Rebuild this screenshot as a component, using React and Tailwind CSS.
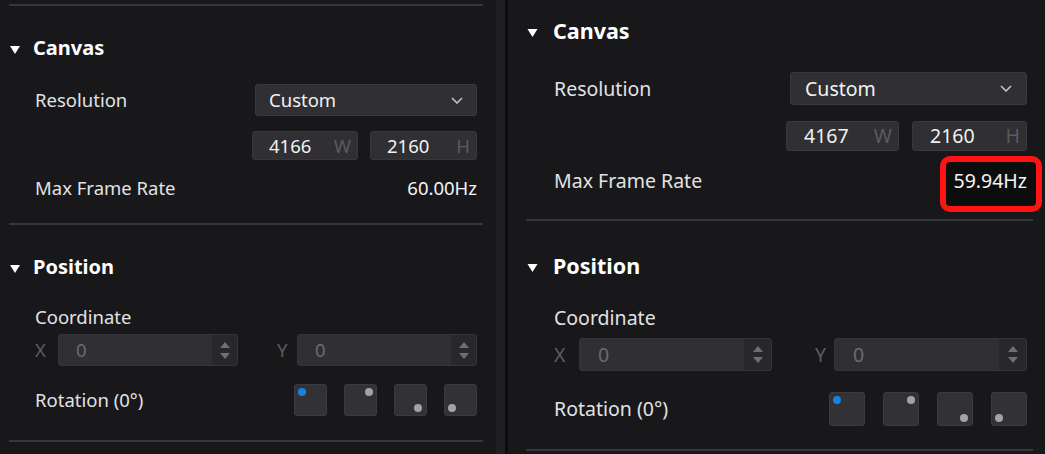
import React from 'react';

// two copies of the same property panel, the right one drawn a bit larger
const SMALL = {
  root: 'w-[496px] pt-[4px]',
  topLine: 'ml-[9px] w-[474px]',
  line: 'ml-[9px] w-[474px]',
  head: 'ml-[10px] h-[28px] gap-[13px]',
  tri: 'w-[10px] h-[8px]',
  title: 'text-[20px]',
  rows: 'ml-[35px] w-[442px]',
  text: 'text-[18.5px]',
  res: 'mt-[22px] h-[32px]',
  select: 'w-[222px] px-[13px]',
  dims: 'mt-[15px] h-[29px] gap-[12px]',
  dimW: 'w-[106px]',
  dimH: 'w-[107px]',
  dimPad: 'pl-[16px] pr-[6px]',
  rate: 'mt-[16px] h-[24px]',
  lineMid: 'mt-[23px]',
  head2: 'mt-[28px]',
  coord: 'mt-[24px] h-[24px]',
  xy: 'mt-[5px] h-[32px]',
  xLabel: 'w-[23px]',
  yLabel: 'w-[20px]',
  xyInput: 'w-[180px]',
  stepper: 'w-[25px]',
  zeroPad: 'pl-[17px]',
  rot: 'mt-[18px] h-[32px]',
  boxes: 'gap-[17px]',
  box: 'w-[33px] h-[32px]',
  lineEnd: 'mt-[24px]',
};

const LARGE = {
  root: 'flex-1 pt-[16px]',
  topLine: '',
  line: 'ml-[18px] w-[507px]',
  head: 'ml-[19px] h-[30px] gap-[15px]',
  tri: 'w-[11px] h-[8px]',
  title: 'text-[21.5px]',
  rows: 'ml-[46px] w-[473px]',
  text: 'text-[19.5px]',
  res: 'mt-[26px] h-[33px]',
  select: 'w-[237px] px-[14px]',
  dims: 'mt-[16px] h-[30px] gap-[13px]',
  dimW: 'w-[113px]',
  dimH: 'w-[115px]',
  dimPad: 'pl-[17px] pr-[6px]',
  rate: 'mt-[17px] h-[26px]',
  lineMid: 'mt-[25px]',
  head2: 'mt-[30px]',
  coord: 'mt-[24px] h-[26px]',
  xy: 'mt-[7px] h-[33px]',
  xLabel: 'w-[25px]',
  yLabel: 'w-[19px]',
  xyInput: 'w-[193px]',
  stepper: 'w-[27px]',
  zeroPad: 'pl-[18px]',
  rot: 'mt-[21px] h-[34px]',
  boxes: 'gap-[18px]',
  box: 'w-[36px] h-[34px]',
  lineEnd: 'mt-[23px]',
};

const Line = ({ className }) => <div className={`h-[2px] bg-[#36363c] ${className}`} />;

const Header = ({ s, title, className = '' }) => (
  <div className={`flex items-center ${s.head} ${className}`}>
    <svg viewBox="0 0 10 8" className={`${s.tri} mt-[3px]`}>
      <polygon points="0,0 10,0 5,8" fill="#ffffff" />
    </svg>
    <span className={`font-bold text-white ${s.title}`}>{title}</span>
  </div>
);

const Chevron = () => (
  <svg viewBox="0 0 12 7" className="w-[12px] h-[7px]">
    <path d="M1 1l5 5 5-5" fill="none" stroke="#c4c4c7" strokeWidth="1.6" />
  </svg>
);

const Stepper = ({ s }) => (
  <div className={`h-full ${s.stepper} bg-[#28282c] flex flex-col items-center justify-center gap-[5px] rounded-r-[3px]`}>
    <svg viewBox="0 0 10 6" className="w-[10px] h-[6px]">
      <polygon points="0,6 10,6 5,0" fill="#6e6e73" />
    </svg>
    <svg viewBox="0 0 10 6" className="w-[10px] h-[6px]">
      <polygon points="0,0 10,0 5,6" fill="#6e6e73" />
    </svg>
  </div>
);

const DimInput = ({ s, w, value, unit }) => (
  <div className={`h-full ${w} ${s.dimPad} bg-[#2f2f34] border border-[#37373c] rounded-[3px] flex items-center justify-between`}>
    <span className="text-[#f2f2f2]">{value}</span>
    <span className="text-[#5b5b60]">{unit}</span>
  </div>
);

const CoordInput = ({ s }) => (
  <div className={`h-full ${s.xyInput} bg-[#2f2f34] border border-[#34343a] rounded-[3px] flex items-center justify-between overflow-hidden`}>
    <span className={`${s.zeroPad} text-[#6b6b70]`}>0</span>
    <Stepper s={s} />
  </div>
);

const Dot = ({ pos, blue }) => (
  <div className={`absolute w-[8px] h-[8px] rounded-full ${pos} ${blue ? 'bg-[#1b7fe3]' : 'bg-[#a3a3a6]'}`} />
);

const Panel = ({ s, rate, width, height, marked }) => (
  <div className={`${s.root} font-['Noto_Sans',sans-serif] ${s.text}`}>
    {s.topLine && <Line className={s.topLine} />}
    <Header s={s} title="Canvas" className={s.topLine ? 'mt-[28px]' : ''} />

    <div className={s.rows}>
      <div className={`flex items-center justify-between ${s.res}`}>
        <span className="text-[#e2e2e4]">Resolution</span>
        <div className={`h-full ${s.select} bg-[#2f2f34] border border-[#38383d] rounded-[3px] flex items-center justify-between`}>
          <span className="text-[#f2f2f2]">Custom</span>
          <Chevron />
        </div>
      </div>

      <div className={`flex justify-end ${s.dims}`}>
        <DimInput s={s} w={s.dimW} value={width} unit="W" />
        <DimInput s={s} w={s.dimH} value={height} unit="H" />
      </div>

      <div className={`flex items-center justify-between ${s.rate}`}>
        <span className="text-[#e2e2e4]">Max Frame Rate</span>
        <span className="relative">
          {marked && (
            <span className="absolute left-[-14px] right-[-15px] top-[-10px] bottom-[-16px] border-[6px] border-[#ff1414] rounded-[10px] bg-[#0d0d0e]" />
          )}
          <span className="relative text-[#f4f4f4]">{rate}</span>
        </span>
      </div>
    </div>

    <Line className={`${s.line} ${s.lineMid}`} />
    <Header s={s} title="Position" className={s.head2} />

    <div className={s.rows}>
      <div className={`flex items-center ${s.coord}`}>
        <span className="text-[#e2e2e4]">Coordinate</span>
      </div>

      <div className={`flex items-center justify-between ${s.xy}`}>
        <div className="flex items-center h-full">
          <span className={`${s.xLabel} text-[#5d5d62]`}>X</span>
          <CoordInput s={s} />
        </div>
        <div className="flex items-center h-full">
          <span className={`${s.yLabel} text-[#5d5d62]`}>Y</span>
          <CoordInput s={s} />
        </div>
      </div>

      <div className={`flex items-center justify-between ${s.rot}`}>
        <span className="text-[#e2e2e4]">Rotation (0°)</span>
        <div className={`flex h-full ${s.boxes}`}>
          <div className={`relative ${s.box} bg-[#313136] border border-[#3a3a40] rounded-[3px]`}>
            <Dot pos="left-[3px] top-[3px]" blue />
          </div>
          <div className={`relative ${s.box} bg-[#313136] border border-[#3a3a40] rounded-[3px]`}>
            <Dot pos="right-[3px] top-[3px]" />
          </div>
          <div className={`relative ${s.box} bg-[#313136] border border-[#3a3a40] rounded-[3px]`}>
            <Dot pos="right-[4px] bottom-[3px]" />
          </div>
          <div className={`relative ${s.box} bg-[#313136] border border-[#3a3a40] rounded-[3px]`}>
            <Dot pos="left-[3px] bottom-[3px]" />
          </div>
        </div>
      </div>
    </div>

    <Line className={`${s.line} ${s.lineEnd}`} />
  </div>
);

export default function App() {
  return (
    <div className="w-[1045px] h-[454px] overflow-hidden flex bg-[#18181b]">
      <Panel s={SMALL} rate="60.00Hz" width="4166" height="2160" />
      {/* scroll gutter + separator */}
      <div className="w-[9px] bg-[#1f1f23]" />
      <div className="w-[3px] bg-[#0c0c0e]" />
      <Panel s={LARGE} rate="59.94Hz" width="4167" height="2160" marked />
    </div>
  );
}
